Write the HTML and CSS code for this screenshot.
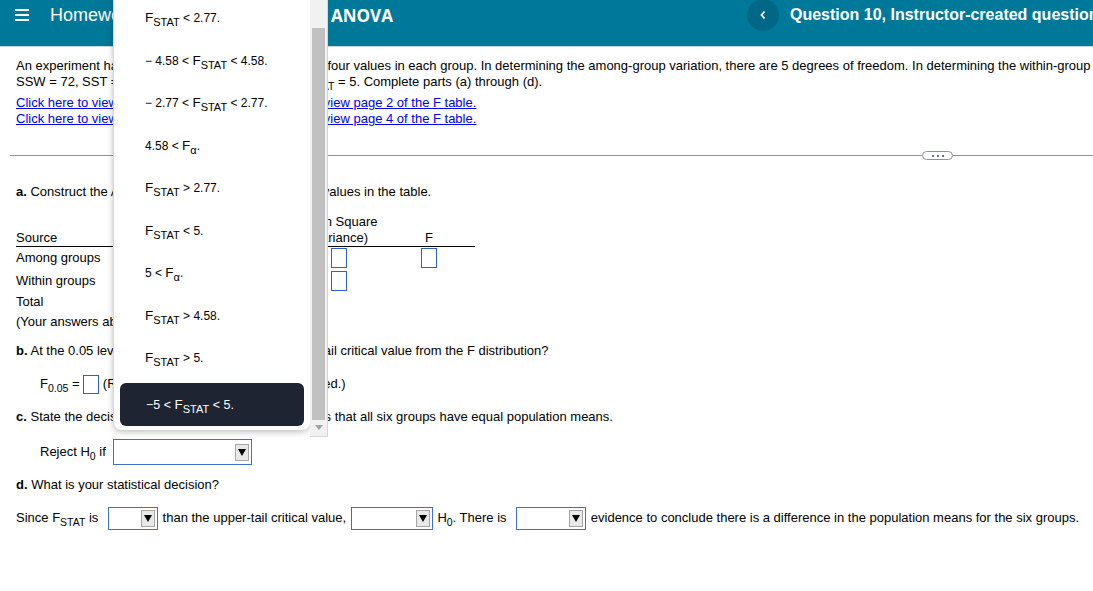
FILE: index.html
```html
<!DOCTYPE html>
<html lang="en">

<head>
    <meta charset="UTF-8">
    <meta name="viewport" content="width=device-width, initial-scale=1.0">
    <title>ANOVA - Question 10</title>

    <link rel="stylesheet" href="styles.css">
</head>

<body>
    <header class="topbar">
        <div class="hw">
            <svg class="burger" width="14" height="12" viewBox="0 0 14 12">
                <rect y="0" width="14" height="2" fill="#fff" />
                <rect y="5" width="14" height="2" fill="#fff" />
                <rect y="10" width="14" height="2" fill="#fff" />
            </svg>
            <span class="hw-title">Homework: Chapter 11 Homework</span>
        </div>
        <div class="q-name">ANOVA</div>
        <div class="q-nav">
            <span class="back">
                <svg width="8" height="10" viewBox="0 0 8 10">
                    <polyline points="5.5,1.5 2.5,5 5.5,8.5" fill="none" stroke="#fff" stroke-width="1.8" />
                </svg>
            </span>
            <span class="q-title">Question 10, Instructor-created question</span>
        </div>
    </header>

    <div class="content">
        <p class="nowrap">An experiment has a single factor with six groups and four values in each group. In determining the among-group variation, there are 5 degrees of freedom. In determining the within-group variation, there are 18 degrees of freedom.<br>SSW = 72, SST = 172, MSA = 20, MSW = 4, and F<sub>STAT</sub> = 5. Complete parts (a) through (d).</p>
        <p class="links">
            <a href="#">Click here to view page 1 of the F table.</a> <a href="#">Click here to view page 2 of the F table.</a><br>
            <a href="#">Click here to view page 3 of the F table.</a> <a href="#">Click here to view page 4 of the F table.</a>
        </p>

        <div class="divider"><span class="more"><i></i><i></i><i></i></span></div>

        <p class="part-a"><b>a.</b> Construct the ANOVA summary table. Fill in all the values in the table.</p>

        <table class="anova">
            <tr class="head">
                <th class="c-src">Source</th>
                <th class="c-df">Degrees of<br>Freedom</th>
                <th class="c-ss">Sum of<br>Squares</th>
                <th class="c-ms">Mean Square<br>(Variance)</th>
                <th class="c-f">F</th>
            </tr>
            <tr class="r1">
                <td class="c-src">Among groups</td>
                <td class="c-df"><span class="box"></span></td>
                <td class="c-ss"><span class="box"></span></td>
                <td class="c-ms"><span class="box"></span></td>
                <td class="c-f"><span class="box"></span></td>
            </tr>
            <tr class="r2">
                <td class="c-src">Within groups</td>
                <td class="c-df"><span class="box"></span></td>
                <td class="c-ss"><span class="box"></span></td>
                <td class="c-ms"><span class="box"></span></td>
                <td class="c-f"></td>
            </tr>
            <tr class="r3">
                <td class="c-src">Total</td>
                <td class="c-df"><span class="box"></span></td>
                <td class="c-ss"><span class="box"></span></td>
                <td class="c-ms"></td>
                <td class="c-f"></td>
            </tr>
        </table>

        <p class="note">(Your answers above should be rounded.)</p>

        <p class="part-b"><b>b.</b> At the 0.05 level of significance, what is the upper-tail critical value from the F distribution?</p>
        <p class="fline">F<sub>0.05</sub> = <span class="box"></span> (Round to two decimal places as needed.)</p>

        <p class="part-c"><b>c.</b> State the decision rule for testing the null hypothesis that all six groups have equal population means.</p>
        <p class="reject">Reject H<sub>0</sub> if <span class="select sel-rule"><span class="arrow"><svg width="8" height="8" viewBox="0 0 8 8"><polygon points="0,1 8,1 4,8" fill="#000" /></svg></span></span></p>

        <p class="part-d"><b>d.</b> What is your statistical decision?</p>
        <p class="since">Since F<sub>STAT</sub> is <span class="select sel-1"><span class="arrow"><svg width="8" height="8" viewBox="0 0 8 8"><polygon points="0,1 8,1 4,8" fill="#000" /></svg></span></span> than the upper-tail critical value, <span class="select sel-2"><span class="arrow"><svg width="8" height="8" viewBox="0 0 8 8"><polygon points="0,1 8,1 4,8" fill="#000" /></svg></span></span> H<sub>0</sub>. There is <span class="select sel-3"><span class="arrow"><svg width="8" height="8" viewBox="0 0 8 8"><polygon points="0,1 8,1 4,8" fill="#000" /></svg></span></span> evidence to conclude there is a difference in the population means for the six groups.</p>
    </div>

    <!-- open list of the "Reject H0 if" select -->
    <div class="dropdown">
        <ul class="menu">
            <li><span class="f">F</span><sub>STAT</sub> &lt; 2.77.</li>
            <li>&minus; 4.58 &lt; <span class="f">F</span><sub>STAT</sub> &lt; 4.58.</li>
            <li>&minus; 2.77 &lt; <span class="f">F</span><sub>STAT</sub> &lt; 2.77.</li>
            <li>4.58 &lt; <span class="f">F</span><sub>&alpha;</sub>.</li>
            <li><span class="f">F</span><sub>STAT</sub> &gt; 2.77.</li>
            <li><span class="f">F</span><sub>STAT</sub> &lt; 5.</li>
            <li>5 &lt; <span class="f">F</span><sub>&alpha;</sub>.</li>
            <li><span class="f">F</span><sub>STAT</sub> &gt; 4.58.</li>
            <li><span class="f">F</span><sub>STAT</sub> &gt; 5.</li>
            <li class="active">&minus;5 &lt; <span class="f">F</span><sub>STAT</sub> &lt; 5.</li>
        </ul>
        <div class="scrollbar">
            <div class="thumb"></div>
            <svg class="down" width="8" height="5" viewBox="0 0 8 5"><polygon points="0,0 8,0 4,5" fill="#a3a3a3" /></svg>
        </div>
    </div>
</body>

</html>
```

FILE: styles.css
```css
:root {
    --teal: #00789a;
    --teal-dark: #006886;
    --field-border: #3d6fd2;
    --rule-color: #8c939c;
}

* {
    margin: 0;
    padding: 0;
    box-sizing: border-box;
}

body {
    position: relative;
    height: 591px;
    overflow: hidden;
    background: #fff;
    color: #000;
    font: 13px/16px "Liberation Sans", Arial, sans-serif;
}

sub {
    font-size: 10.5px;
    line-height: 0;
    vertical-align: -4px;
}

a {
    color: #0000ee;
}

/* header */

.topbar {
    display: flex;
    align-items: flex-start;
    height: 47px;
    background: var(--teal);
    border-bottom: 1px solid #c7d8df;
    color: #fff;
    white-space: nowrap;
}

.hw {
    display: flex;
    align-items: center;
    gap: 21px;
    width: 331px;
    height: 30px;
    padding-left: 15px;
}

.hw-title {
    font-size: 18px;
}

.q-name {
    flex: 1;
    display: flex;
    align-items: center;
    height: 30px;
    font: 700 17px "Open Sans", sans-serif;
}

.q-nav {
    display: flex;
    align-items: center;
    gap: 11px;
    width: 346px;
    height: 30px;
    flex-shrink: 0;
}

.back {
    display: flex;
    align-items: center;
    justify-content: center;
    width: 32px;
    height: 32px;
    border-radius: 50%;
    background: var(--teal-dark);
    flex-shrink: 0;
}

.q-title {
    font-size: 16px;
    font-weight: 700;
}

/* question body */

.content {
    padding: 11px 0 0 16px;
}

.nowrap,
.links {
    white-space: nowrap;
}

.links {
    margin-top: 5px;
}

.divider {
    display: flex;
    align-items: center;
    height: 11px;
    margin: 23px 0 0 -6px;
}

.divider::before {
    content: "";
    width: 912px;
    border-top: 1px solid var(--rule-color);
}

.divider::after {
    content: "";
    flex: 1;
    border-top: 1px solid var(--rule-color);
}

.more {
    display: flex;
    align-items: center;
    justify-content: center;
    gap: 3px;
    width: 31px;
    height: 9px;
    border: 1px solid var(--rule-color);
    border-radius: 5px;
}

.more i {
    width: 2px;
    height: 2px;
    background: #6a7079;
}

.part-a {
    margin-top: 23px;
}

.anova {
    margin-top: 14px;
    border-collapse: collapse;
    white-space: nowrap;
}

.anova th {
    font-weight: normal;
    vertical-align: bottom;
    border-bottom: 1px solid #000;
}

.anova td {
    vertical-align: middle;
}

.c-src {
    width: 120px;
    text-align: left;
}

.c-df,
.c-ss {
    width: 79px;
    text-align: center;
}

.c-ms {
    width: 89px;
    text-align: center;
}

.c-f {
    width: 92px;
    text-align: center;
}

.r1 {
    height: 23px;
}

.r2 {
    height: 22px;
}

.r3 {
    height: 21px;
}

.box {
    display: inline-block;
    width: 16px;
    height: 20px;
    border: 1px solid #2d62c6;
    background: #fff;
    vertical-align: middle;
}

.note {
    margin-top: 1px;
}

.part-b {
    margin-top: 13px;
}

.fline {
    height: 22px;
    line-height: 22px;
    margin-top: 14px;
    padding-left: 24px;
    white-space: nowrap;
}

.fline .box {
    height: 19px;
}

.part-c {
    margin-top: 14px;
}

.reject {
    height: 26px;
    line-height: 26px;
    margin-top: 14px;
    padding-left: 24px;
    white-space: nowrap;
}

.part-d {
    margin-top: 12px;
}

.since {
    height: 23px;
    line-height: 23px;
    margin-top: 13px;
    white-space: nowrap;
}

.select {
    display: inline-flex;
    align-items: center;
    justify-content: flex-end;
    height: 23px;
    margin: 0 1px;
    padding-right: 2px;
    border: 1px solid var(--field-border);
    background: #fff;
    vertical-align: middle;
}

.arrow {
    display: flex;
    align-items: center;
    justify-content: center;
    width: 14px;
    height: 17px;
    border: 1px solid #a6a6a6;
    background: #e8e8e8;
}

.sel-rule {
    width: 139px;
    height: 26px;
    margin-left: 4px;
}

.sel-1 {
    width: 50px;
    margin-left: 6px;
}

.sel-2 {
    width: 82px;
}

.sel-3 {
    width: 70px;
    margin-left: 6px;
}

/* open dropdown list */

.dropdown {
    position: absolute;
    left: 113px;
    top: -3px;
    display: flex;
    width: 215px;
    height: 440px;
}

.menu {
    width: 197px;
    height: 433px;
    list-style: none;
    background: #fff;
    border-left: 1px solid #d8d8d8;
    border-radius: 0 0 8px 8px;
    box-shadow: 0 2px 6px rgba(0, 0, 0, 0.25);
}

.menu li {
    height: 42.5px;
    line-height: 42.5px;
    padding-left: 31px;
    font-size: 12px;
    white-space: nowrap;
}

.menu .f {
    font-size: 13.5px;
}

.menu sub {
    font-size: 11px;
}

.menu li.active {
    height: 43px;
    line-height: 43px;
    margin: 3.5px 6px 0;
    padding-left: 26px;
    border-radius: 6px;
    background: #1e2431;
    color: #fff;
    font-size: 12.5px;
}

.scrollbar {
    display: flex;
    flex-direction: column;
    align-items: center;
    width: 18px;
    height: 440px;
    background: #f1f1f1;
    border-right: 1px solid #d6d6d6;
    border-bottom: 1px solid #d6d6d6;
}

.thumb {
    width: 13px;
    height: 392px;
    margin: 31px 1px 0 0;
    background: #c1c1c1;
}

.down {
    margin-top: 5px;
}
```
